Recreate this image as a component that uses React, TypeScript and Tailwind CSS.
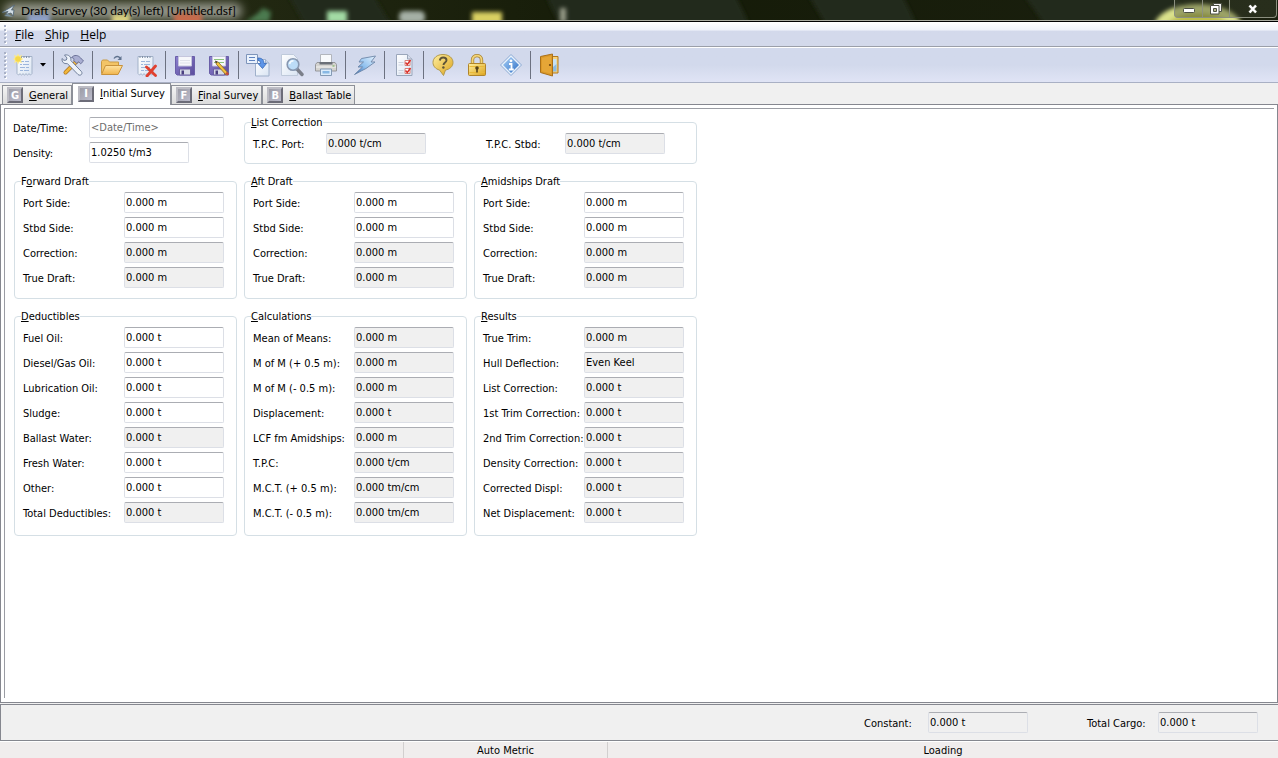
import { useState } from "react";
import type { ReactNode } from "react";

interface FieldProps {
  label: string;
  value: string;
  readOnly?: boolean;
}

interface GroupProps {
  title: string;
  hotkey: number;
  fields: FieldProps[];
}

const ro = (label: string, value: string): FieldProps => ({ label, value, readOnly: true });
const rw = (label: string, value: string): FieldProps => ({ label, value });

const draftFields: FieldProps[] = [
  rw("Port Side:", "0.000 m"),
  rw("Stbd Side:", "0.000 m"),
  ro("Correction:", "0.000 m"),
  ro("True Draft:", "0.000 m"),
];

const draftGroups: GroupProps[] = [
  { title: "Forward Draft", hotkey: 1, fields: draftFields },
  { title: "Aft Draft", hotkey: 0, fields: draftFields },
  { title: "Amidships Draft", hotkey: 0, fields: draftFields },
];

const totalGroups: GroupProps[] = [
  {
    title: "Deductibles",
    hotkey: 0,
    fields: [
      rw("Fuel Oil:", "0.000 t"),
      rw("Diesel/Gas Oil:", "0.000 t"),
      rw("Lubrication Oil:", "0.000 t"),
      rw("Sludge:", "0.000 t"),
      ro("Ballast Water:", "0.000 t"),
      rw("Fresh Water:", "0.000 t"),
      rw("Other:", "0.000 t"),
      ro("Total Deductibles:", "0.000 t"),
    ],
  },
  {
    title: "Calculations",
    hotkey: 0,
    fields: [
      ro("Mean of Means:", "0.000 m"),
      ro("M of M (+ 0.5 m):", "0.000 m"),
      ro("M of M (- 0.5 m):", "0.000 m"),
      ro("Displacement:", "0.000 t"),
      ro("LCF fm Amidships:", "0.000 m"),
      ro("T.P.C:", "0.000 t/cm"),
      ro("M.C.T. (+ 0.5 m):", "0.000 tm/cm"),
      ro("M.C.T. (- 0.5 m):", "0.000 tm/cm"),
    ],
  },
  {
    title: "Results",
    hotkey: 0,
    fields: [
      ro("True Trim:", "0.000 m"),
      ro("Hull Deflection:", "Even Keel"),
      ro("List Correction:", "0.000 t"),
      ro("1st Trim Correction:", "0.000 t"),
      ro("2nd Trim Correction:", "0.000 t"),
      ro("Density Correction:", "0.000 t"),
      ro("Corrected Displ:", "0.000 t"),
      ro("Net Displacement:", "0.000 t"),
    ],
  },
];

const tabs = ["General", "Initial Survey", "Final Survey", "Ballast Table"];

function Hotkey({ text, at = 0 }: { text: string; at?: number }) {
  return (
    <span>
      {text.slice(0, at)}
      <span className="underline underline-offset-1">{text[at]}</span>
      {text.slice(at + 1)}
    </span>
  );
}

const inputBase =
  "h-[21px] rounded-[2px] border border-[#dcdfe6] border-t-[#abadb3] px-px outline-none placeholder:text-[#6d6d6d]";

function Field({ label, value, readOnly, labelClass = "w-[101px]" }: FieldProps & { labelClass?: string }) {
  return (
    <label className="flex items-center">
      <span className={`${labelClass} shrink-0 whitespace-nowrap pt-0.5`}>{label}</span>
      <input
        className={`${inputBase} w-[100px] ${readOnly ? "bg-[#f0f0f0]" : "bg-white"}`}
        defaultValue={value}
        readOnly={readOnly}
      />
    </label>
  );
}

function Group({ title, hotkey, fields, className }: GroupProps & { className: string }) {
  return (
    <fieldset className={`min-w-0 rounded-[4px] border border-[#d5dfe5] pl-1.5 pt-[3px] ${className}`}>
      <legend className="h-[15px] leading-[15px]">
        <Hotkey text={title} at={hotkey} />
      </legend>
      <div className="flex flex-col gap-1 pl-0.5">
        {fields.map((field) => (
          <Field key={field.label} {...field} />
        ))}
      </div>
    </fieldset>
  );
}

function Icon({ children }: { children: ReactNode }) {
  return (
    <svg width="24" height="24" viewBox="0 0 24 24" fill="none" className="shrink-0" aria-hidden="true">
      {children}
    </svg>
  );
}

function SharedGradients() {
  return (
    <svg width="0" height="0" className="absolute" aria-hidden="true">
      <defs>
        <linearGradient id="paper" x1="0" y1="0" x2="1" y2="1">
          <stop offset="0" stopColor="#ffffff" />
          <stop offset="1" stopColor="#d9e4f3" />
        </linearGradient>
        <linearGradient id="gold" x1="0" y1="0" x2="1" y2="1">
          <stop offset="0" stopColor="#fff0a0" />
          <stop offset="1" stopColor="#dba21c" />
        </linearGradient>
        <linearGradient id="folder" x1="0" y1="0" x2="0" y2="1">
          <stop offset="0" stopColor="#ffe3a0" />
          <stop offset="1" stopColor="#f0b44c" />
        </linearGradient>
        <linearGradient id="blue" x1="0" y1="0" x2="1" y2="1">
          <stop offset="0" stopColor="#a9d1f8" />
          <stop offset="1" stopColor="#2f6fc4" />
        </linearGradient>
        <linearGradient id="bolt" x1="1" y1="0" x2="0" y2="1">
          <stop offset="0" stopColor="#e6f4ff" />
          <stop offset=".55" stopColor="#8fc0ee" />
          <stop offset="1" stopColor="#2f62ac" />
        </linearGradient>
        <linearGradient id="violet" x1="0" y1="0" x2="1" y2="1">
          <stop offset="0" stopColor="#8c80cf" />
          <stop offset="1" stopColor="#5a4c9c" />
        </linearGradient>
      </defs>
    </svg>
  );
}

function Notepad() {
  return (
    <>
      <path d="M4 3.5h15v17l-1.500 1.500-1.500-1.300-1.500 1.300-1.500-1.300-1.500 1.300-1.500-1.300L8.500 22l-1.500-1.300L5.500 22 4 20.500z" fill="url(#paper)" stroke="#a3b2c8" />
      <path d="M6 3v2M8.500 3v2M11 3v2M13.500 3v2M16 3v2" stroke="#8391a8" />
      <path d="M7 8.500h4m1 0h4M7 11.500h2m1 0h6M7 14.500h5m1 0h3M7 17.500h3m1 0h5" stroke="#9db6dc" />
    </>
  );
}

function NewIcon() {
  return (
    <Icon>
      <Notepad />
      <path d="M5 .500l1.300 2.500L9 1.800 8 4.500 10.200 6 8 7.400 9 10 6.300 9 5 11.500 3.700 9 1 10l1-2.600L0 6l2-1.500L1 1.800 3.700 3z" fill="#fbe98a" />
      <circle cx="5" cy="6" r="2.800" fill="#f6d84a" />
    </Icon>
  );
}

function ToolsIcon() {
  return (
    <Icon>
      <path d="M4.500 19.500L16 8" stroke="#a9731c" strokeWidth="4" strokeLinecap="round" />
      <path d="M4.500 19.500L14 10" stroke="#f1b63c" strokeWidth="2.600" strokeLinecap="round" />
      <path d="M10.500 4.500c3-3 6.500-2.500 9 .300l3 3.200-2.800 2.800-2-2-2 1.600-3.200-3.200c1-1 .500-2.300-2-2.700z" fill="#a9aed2" stroke="#6c7399" />
      <path d="M3.500 2l2.500 3-.700 2-2.300.400L1 5.500c-.300 3.800 2 5.600 5.300 5L17 21.500c2.400 2 5.200-.700 3.400-3L9.800 7.500c.700-3.300-1.800-6.300-6.300-5.500z" fill="#edf2f9" stroke="#71809c" />
    </Icon>
  );
}

function OpenIcon() {
  return (
    <Icon>
      <path d="M1.500 20.500v-12l1-1.500h5l2 2h9v4" fill="#f3c466" stroke="#c99a45" />
      <path d="M1.500 21.500l4-9h17l-4.500 9z" fill="url(#folder)" stroke="#c8923c" strokeLinejoin="round" />
      <path d="M14 5.500c1.500-2.500 4.500-2.700 6-.500" stroke="#60738e" strokeWidth="1.400" />
      <path d="M21.500 3v4h-4z" fill="#60738e" />
    </Icon>
  );
}

function DeleteIcon() {
  return (
    <Icon>
      <Notepad />
      <path d="M12.500 14l9 8.500M21.500 13l-8.500 10" stroke="#e0402f" strokeWidth="2.800" strokeLinecap="round" />
    </Icon>
  );
}

function Floppy() {
  return (
    <>
      <path d="M2.500 3.500h19v18.500h-17.500l-1.500-1.500z" fill="url(#violet)" stroke="#6a5fa8" />
      <path d="M5.500 3.500h13v9.500h-13z" fill="#f6f7fb" stroke="#c5c6dd" />
      <path d="M6.500 16h11v6h-11z" fill="#d6dae6" stroke="#6a5fa2" />
      <path d="M8.500 17.500h2.500v4h-2.500z" fill="#4a3f80" />
    </>
  );
}

function SaveIcon() {
  return (
    <Icon>
      <Floppy />
      <path d="M7 7.500h10M7 10h10" stroke="#dfe2ea" />
    </Icon>
  );
}

function SaveEditIcon() {
  return (
    <Icon>
      <Floppy />
      <path d="M7 6.500h10M7 9.500h10" stroke="#8cc47c" />
      <path d="M8.500 8.500l2.800.700 10 11-2 2-10-11z" fill="#f2c33c" stroke="#86642a" strokeWidth=".8" />
      <path d="M8 7.500l1.200 2.700 1.400-1.400z" fill="#3a3a3a" />
      <path d="M20 18.800l2 2.200-1.500 1.600-2.200-2.200z" fill="#c44a39" />
    </Icon>
  );
}

function CopyIcon() {
  return (
    <Icon>
      <path d="M9.500 6.500h10l3.500 3.500v13h-13.500z" fill="url(#paper)" stroke="#9fb0ca" />
      <path d="M19.500 6.500v3.500h3.500" fill="#c9d6ea" stroke="#9fb0ca" />
      <path d="M.500 1.500h11v9h-11z" fill="#eaf2fd" stroke="#7d94ba" />
      <path d="M3 4.500h6M3 7.500h6" stroke="#5f83c0" />
      <path d="M12 5c4 0 6 2 6 5.500h2.500L16.500 15.500l-4.500-5h2.500c0-2-.700-3-2.500-3z" fill="#5d95e8" stroke="#3568b6" strokeWidth=".8" />
    </Icon>
  );
}

function PreviewIcon() {
  return (
    <Icon>
      <path d="M1.500 1.500h12l4 4v17h-16z" fill="url(#paper)" stroke="#bfcadb" />
      <path d="M17 16l5 5.500" stroke="#7b7f8a" strokeWidth="3.400" strokeLinecap="round" />
      <circle cx="13" cy="11.500" r="5.800" fill="#bcdcf7" stroke="#8797b0" strokeWidth="1.600" />
      <path d="M9.500 11c.400-2.200 2-3.200 4-3.200" stroke="#f4faff" strokeWidth="1.600" />
    </Icon>
  );
}

function PrinterIcon() {
  return (
    <Icon>
      <path d="M6.500 1.500h11v9h-11z" fill="#f8fafc" stroke="#b2b6bd" />
      <path d="M3 9.500h18l1.500 2v6.500h-21v-6.500z" fill="#d4d3d0" stroke="#96979b" />
      <path d="M5.500 9h13v2.500h-13z" fill="#6b7078" />
      <path d="M2 14h20" stroke="#f3f3f2" />
      <path d="M6.500 16h11v6.500h-11z" fill="#dcecfa" stroke="#849ab5" />
      <path d="M8.500 18h7v2.500h-7z" fill="#88b8e4" />
      <path d="M18.500 13h2" stroke="#6aa94f" />
    </Icon>
  );
}

function BoltIcon() {
  return (
    <Icon>
      <path d="M8.500 5.500L22.500 3 18 9h4L13 15.500 1.500 21.500 9.500 14H5L10.500 9H6z" fill="url(#bolt)" stroke="#6d87a8" strokeWidth=".9" strokeLinejoin="round" />
    </Icon>
  );
}

function ChecklistIcon() {
  return (
    <Icon>
      <path d="M4.500 1.500h11l4.500 4.500v16.500h-15.500z" fill="url(#paper)" stroke="#9aa6ba" />
      <path d="M15.500 1.500v4.500h4.500" fill="#d7deeb" stroke="#9aa6ba" />
      <path d="M6.500 9.500h5M6.500 12h5M6.500 17.500h5M6.500 20h5" stroke="#ccd3df" />
      <path d="M13 7.500h5v5h-5zM13 15.500h5v5h-5z" fill="#fff" stroke="#d98078" />
      <path d="M13.500 9.500l1.800 2 3.200-4.500M13.500 17.500l1.800 2 3.200-4.500" stroke="#d9322c" strokeWidth="1.500" />
    </Icon>
  );
}

function HelpIcon() {
  return (
    <Icon>
      <path d="M12 1.500c6 0 10 3.500 10 8 0 4-3.500 7-7.500 7.500L12.500 22.500 8.500 17C4.500 16 2 13 2 9.500c0-4.500 4-8 10-8z" fill="url(#gold)" stroke="#b39a4c" />
      <path d="M8.800 7.500c.300-2 1.700-3 3.400-3s3.300 1 3.300 2.800c0 2.200-3 2.200-3 4.700" stroke="#5e5438" strokeWidth="1.900" />
      <circle cx="12.400" cy="14.500" r="1.200" fill="#5e5438" />
    </Icon>
  );
}

function LockIcon() {
  return (
    <Icon>
      <path d="M7.500 12V7c0-5.800 9-5.800 9 0v5" stroke="#a98536" strokeWidth="3.400" />
      <path d="M7.500 12V7c0-5.800 9-5.800 9 0v5" stroke="#f3d478" strokeWidth="1.800" />
      <rect x="3.500" y="10.500" width="17" height="12" rx="1" fill="url(#gold)" stroke="#b0842a" />
      <path d="M4.500 13.500h15M4.500 19.500h15" stroke="#e9b93a" />
      <circle cx="12" cy="15" r="1.800" fill="#54401a" />
      <path d="M12 15v4.500" stroke="#54401a" strokeWidth="1.600" />
    </Icon>
  );
}

function InfoIcon() {
  return (
    <Icon>
      <path d="M12 1.500L22.500 12 12 22.500 1.500 12z" fill="#e8f1fb" stroke="#8ba9d3" strokeLinejoin="round" />
      <path d="M12 4L20 12 12 20 4 12z" fill="url(#blue)" />
      <circle cx="12" cy="7.800" r="1.400" fill="#fff" />
      <path d="M10 11h2.500v5.500M9.800 16.500h5" stroke="#fff" strokeWidth="1.800" />
    </Icon>
  );
}

function ExitIcon() {
  return (
    <Icon>
      <path d="M13.500 3.500h6.500v16.500h-6.500z" fill="#f8d27a" stroke="#b27a1d" />
      <path d="M15 6h3.500v9H15z" fill="#c4e1f6" />
      <path d="M15 14l3.500-3v7.500H15z" fill="#8bbbe2" />
      <path d="M2.500 3.500L14.500 1v22l-12-3.500z" fill="#dd9a28" stroke="#a9701a" strokeLinejoin="round" />
      <path d="M4 5l9-2v17.500l-9-2.300z" fill="#e5a637" />
      <circle cx="12" cy="12" r="1.100" fill="#6d4410" />
    </Icon>
  );
}

const toolGroups: { name: string; icon: ReactNode }[][] = [
  [{ name: "Settings", icon: <ToolsIcon /> }],
  [
    { name: "Open", icon: <OpenIcon /> },
    { name: "Delete", icon: <DeleteIcon /> },
  ],
  [
    { name: "Save", icon: <SaveIcon /> },
    { name: "Save As", icon: <SaveEditIcon /> },
  ],
  [
    { name: "Copy", icon: <CopyIcon /> },
    { name: "Preview", icon: <PreviewIcon /> },
    { name: "Print", icon: <PrinterIcon /> },
  ],
  [{ name: "Calculate", icon: <BoltIcon /> }],
  [{ name: "Checklist", icon: <ChecklistIcon /> }],
  [
    { name: "Help", icon: <HelpIcon /> },
    { name: "Lock", icon: <LockIcon /> },
    { name: "About", icon: <InfoIcon /> },
  ],
  [{ name: "Exit", icon: <ExitIcon /> }],
];

function Gripper({ dots }: { dots: number }) {
  return (
    <div className="flex w-2 flex-col items-center gap-0.5">
      {Array.from({ length: dots }, (_, i) => (
        <span key={i} className="size-0.5 bg-[#a9b1c6] shadow-[1px_1px_0_#ffffff]" />
      ))}
    </div>
  );
}

function TitleBar() {
  return (
    <header className="relative flex h-[22px] justify-between overflow-hidden border-b border-black bg-linear-to-r from-[#2a3018] via-[#151b08] to-[#1b200f] shadow-[inset_0_-1px_0_#a9aba0]">
      <svg className="absolute left-0 top-0 h-5 w-full" aria-hidden="true">
        <defs>
          <filter id="soft" x="-50%" y="-50%" width="200%" height="200%">
            <feGaussianBlur stdDeviation="2" />
          </filter>
          <filter id="glow" x="-20%" y="-80%" width="140%" height="260%">
            <feGaussianBlur stdDeviation="5" />
          </filter>
        </defs>
        <path
          d="M285 -10h85l26 42h-87zM543 -10h190l20 42H563zM805 -10h95l20 42h-90zM1020 -10h150l30 42h-150z"
          fill="#242a1a"
          filter="url(#soft)"
        />
        <rect x="4" y="3" width="238" height="16" rx="8" fill="#94968a" filter="url(#glow)" />
        <g filter="url(#soft)">
          <rect x="28" y="14" width="22" height="12" fill="#8fa0c8" />
          <rect x="112" y="14" width="18" height="12" fill="#d8cf80" />
          <rect x="174" y="13" width="28" height="12" fill="#c56a4c" />
          <path d="M245 22l12-8 6-6 8 4-2 10z" fill="#4c7a50" />
          <rect x="327" y="11" width="20" height="12" fill="#a3dba4" />
          <rect x="399" y="11" width="26" height="12" rx="5" fill="#a5b0a6" />
          <rect x="472" y="12" width="30" height="12" fill="#d9d062" />
          <rect x="560" y="8" width="6" height="14" fill="#9b9f8c" />
        </g>
      </svg>
      <svg className="absolute right-0 top-0 h-5 w-[140px]" aria-hidden="true">
        <g filter="url(#soft)">
          <ellipse cx="60" cy="27" rx="44" ry="23" fill="#dbe28c" />
          <ellipse cx="60" cy="28" rx="32" ry="15" fill="#bcbd48" />
        </g>
      </svg>
      <div className="relative flex items-center gap-1.5 pl-0.5 font-['Lato',sans-serif] text-[12px] leading-[20px] text-black">
        <svg width="13" height="14" viewBox="0 0 13 14" aria-hidden="true">
          <path d="M0 8.500L12.500 1l-3 5H12l-1 6-2-3-5.500 1.500L6 7.500z" fill="#d3dee6" stroke="#4d6272" strokeWidth=".8" />
          <path d="M2 12l4-2 5 3z" fill="#7b93a3" />
        </svg>
        <h1 className="whitespace-nowrap">Draft Survey (30 day(s) left) [Untitled.dsf]</h1>
      </div>
      <div className="relative mr-px flex h-[18px] rounded-b-[4px] border border-t-0 border-[#8b8f7f] bg-[#3c4330]/40">
        <button aria-label="Minimize" className="flex w-[28px] items-end justify-center border-r border-[#8b8f7f] pb-1">
          <svg width="12" height="5" aria-hidden="true">
            <rect x=".5" y=".5" width="11" height="4" rx="1" fill="#fff" stroke="#4a4e42" />
          </svg>
        </button>
        <button aria-label="Restore" className="flex w-[27px] items-center justify-center border-r border-[#8b8f7f]">
          <svg width="12" height="12" fill="none" aria-hidden="true">
            <path d="M3.500 .500h8v8h-8z" fill="#f4f4f4" stroke="#4a4e42" />
            <path d="M.500 2.500h8.500v8.500h-8.500z" fill="#fff" stroke="#4a4e42" />
            <path d="M3.500 5.500h3v3h-3z" fill="#b6b98c" stroke="#4a4e42" />
          </svg>
        </button>
        <button aria-label="Close" className="flex w-[46px] items-center justify-center">
          <svg width="12" height="10" aria-hidden="true">
            <path d="M2.500 1.500l6.500 7M9 1.500l-6.500 7" stroke="#454b3a" strokeWidth="4" />
            <path d="M2.500 1.500l6.500 7M9 1.500l-6.500 7" stroke="#fff" strokeWidth="2.400" />
          </svg>
        </button>
      </div>
    </header>
  );
}

export default function App() {
  const [activeTab, setActiveTab] = useState("Initial Survey");

  return (
    <div className="flex min-h-screen flex-col bg-[#f0f0f0] font-['DejaVu_Sans_Condensed','DejaVu_Sans',sans-serif] text-[11px] leading-[15px] text-black">
      <SharedGradients />
      <TitleBar />

      <nav className="flex h-[25px] items-center gap-3 border-b border-[#9b9fa9] bg-linear-to-b from-white from-0% via-[#eef1f9] via-35% to-[#d3d9eb] to-36% pl-px font-['Open_Sans',sans-serif] text-[12px]">
        <Gripper dots={5} />
        <div className="-ml-1.5 flex gap-[11px]">
          {["File", "Ship", "Help"].map((item) => (
            <button key={item}>
              <Hotkey text={item} />
            </button>
          ))}
        </div>
      </nav>

      <div
        role="toolbar"
        className="flex h-[36px] items-center border-b border-t border-b-[#a9b0c4] border-t-white bg-linear-to-b from-[#d2d9ec] from-50% to-[#e0e4f5] pl-px"
      >
        <Gripper dots={7} />
        <button aria-label="New" className="flex w-[42px] items-center gap-[3px] pl-1">
          <NewIcon />
          <svg width="6" height="4" aria-hidden="true">
            <path d="M0 0h6L3 3.500z" fill="#000" />
          </svg>
        </button>
        {toolGroups.map((group, i) => (
          <div key={i} className="flex items-center">
            <span className="mx-0.5 h-[28px] w-px bg-[#6c7180]" />
            {group.map((tool) => (
              <button key={tool.name} aria-label={tool.name} className="flex w-[34px] justify-center">
                {tool.icon}
              </button>
            ))}
          </div>
        ))}
      </div>

      <div role="tablist" className="flex h-[21px] items-end pl-0.5">
        {tabs.map((tab) => {
          const isActive = tab === activeTab;
          return (
            <button
              key={tab}
              role="tab"
              aria-selected={isActive}
              onClick={() => setActiveTab(tab)}
              className={`flex items-center gap-1.5 whitespace-nowrap border border-b-0 border-[#8d9098] ${
                isActive
                  ? "relative z-10 -mb-px h-[22px] bg-white px-[5px] pb-0.5"
                  : "h-[19px] bg-linear-to-b from-[#f4f4f4] to-[#dcdcdc] pl-1 pr-[3px]"
              }`}
            >
              <span className="flex size-4 items-center justify-center border-2 border-b-[#6c6c78] border-l-[#bcbcc4] border-r-[#6c6c78] border-t-[#bcbcc4] bg-linear-to-br from-[#9c9ca6] to-[#bcbccc] text-[11px] font-bold leading-none text-white">
                {tab[0]}
              </span>
              <Hotkey text={tab} />
            </button>
          );
        })}
      </div>

      <main className="flex flex-1 flex-col border border-[#85878f] bg-white px-[3px] pb-1 pt-[3px]">
        <div className="flex-1 border-l border-t border-[#9a9ca3] pb-6 pl-[9px] pt-1.5">
          <div className="grid grid-cols-[repeat(3,223px)] gap-x-[7px] gap-y-2.5">
            <div className="-ml-px flex flex-col gap-1 pt-0.5">
              <label className="flex items-center">
                <span className="w-[76px] shrink-0 pt-0.5">Date/Time:</span>
                <input className={`${inputBase} w-[135px] bg-white`} placeholder="<Date/Time>" />
              </label>
              <Field label="Density:" value="1.0250 t/m3" labelClass="w-[76px]" />
            </div>
            <fieldset className="col-span-2 rounded-[4px] border border-[#d5dfe5] pb-[9px] pl-1.5 pt-[3px]">
              <legend className="h-[15px] leading-[15px]">
                <Hotkey text="List Correction" />
              </legend>
              <div className="flex gap-[60px] pl-0.5">
                <Field label="T.P.C. Port:" value="0.000 t/cm" readOnly labelClass="w-[73px]" />
                <Field label="T.P.C. Stbd:" value="0.000 t/cm" readOnly labelClass="w-[79px]" />
              </div>
            </fieldset>
            {draftGroups.map((group) => (
              <Group key={group.title} {...group} className="pb-2.5" />
            ))}
            {totalGroups.map((group) => (
              <Group key={group.title} {...group} className="pb-3" />
            ))}
          </div>
        </div>
      </main>

      <section className="mt-px flex h-[37px] items-center justify-end gap-[59px] border-y border-l border-[#85878f] pr-5">
        <Field label="Constant:" value="0.000 t" readOnly labelClass="w-[64px]" />
        <Field label="Total Cargo:" value="0.000 t" readOnly labelClass="w-[71px]" />
      </section>

      <footer className="flex h-[17px] border-t border-white bg-[#f0eded] text-center leading-[17px]">
        <div className="w-[404px] border-r border-[#d2cfcf]" />
        <div className="w-[204px] border-r border-[#d2cfcf]">Auto Metric</div>
        <div className="flex-1">Loading</div>
      </footer>
    </div>
  );
}
